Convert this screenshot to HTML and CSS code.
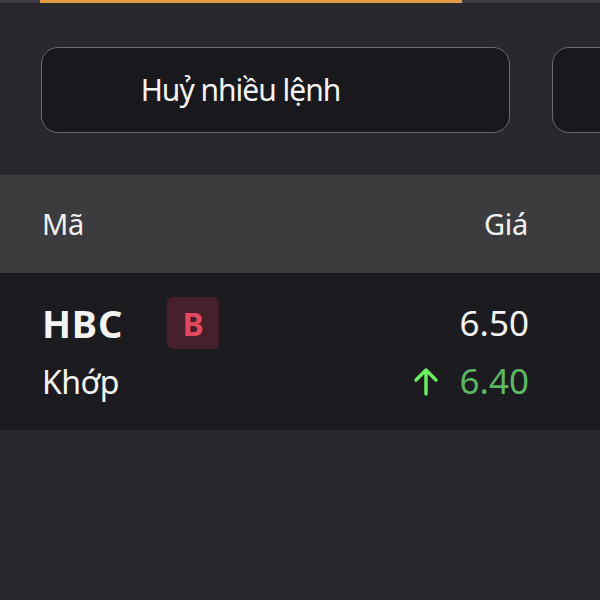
FILE: index.html
```html
<!DOCTYPE html>
<html lang="vi">
<head>
  <meta charset="UTF-8" />
  <meta name="viewport" content="width=device-width, initial-scale=1.0"/>
  <title>Lệnh</title>
  <link rel="stylesheet" href="styles.css">
</head>
<body>
  <div class="tabs">
    <div class="tab-line"></div>
  </div>

  <div class="actions">
    <button class="action">Huỷ nhiều lệnh</button>
    <button class="action"></button>
  </div>

  <div class="table-head">
    <span>Mã</span>
    <span>Giá</span>
  </div>

  <div class="order">
    <div class="order-left">
      <div class="symbol-line">
        <span class="symbol">HBC</span>
        <span class="side">B</span>
      </div>
      <div class="status">Khớp</div>
    </div>
    <div class="order-right">
      <div class="price">6.50</div>
      <div class="matched">
        <svg class="arrow" width="26" height="30" viewBox="0 0 26 30">
          <path d="M13 28V4M3 14L13 4l10 10" fill="none" stroke="#6cf063" stroke-width="3.4" stroke-linecap="round" stroke-linejoin="round"/>
        </svg>
        <span>6.40</span>
      </div>
    </div>
  </div>
</body>
</html>
```

FILE: styles.css
```css
body {
  margin: 0;
  height: 600px;
  overflow: hidden;
  background: #29282d;
  font-family: 'Noto Sans', 'Open Sans', sans-serif;
  color: #f4f4f4;
}
.tabs {
  height: 3px;
  background: #3b3b42;
  padding-left: 40px;
}
.tab-line {
  width: 422px;
  height: 3px;
  background: #e09a45;
}
.actions {
  display: flex;
  gap: 42px;
  padding: 44px 0 0 41px;
  overflow: hidden;
}
.action {
  flex: none;
  width: 469px;
  height: 86px;
  border: 1.5px solid #6a696e;
  border-radius: 17px;
  background: #19181c;
  color: #f4f4f4;
  font-family: 'Noto Sans', sans-serif;
  font-size: 30px;
  letter-spacing: -1px;
  padding: 0 70px 2px 0;
}
.table-head {
  margin-top: 42px;
  height: 96px;
  background: #3c3c3f;
  display: flex;
  justify-content: space-between;
  align-items: center;
  padding: 0 72px 2px 42px;
  font-size: 29px;
  letter-spacing: -0.3px;
  color: #f2f2f2;
}
.order {
  height: 157px;
  background: #1c1b1f;
  display: flex;
  justify-content: space-between;
  padding: 22px 71px 0 42px;
  box-sizing: border-box;
}
.symbol-line {
  display: flex;
  align-items: center;
  gap: 44px;
  height: 56px;
}
.symbol {
  font-size: 38px;
  font-weight: bold;
  letter-spacing: 0.8px;
}
.side {
  width: 52px;
  height: 52px;
  border-radius: 6px;
  background: #45202a;
  color: #e3485f;
  font-size: 32px;
  font-weight: bold;
  display: flex;
  align-items: center;
  justify-content: center;
}
.status {
  margin-top: 9px;
  font-size: 32px;
  letter-spacing: -0.5px;
}
.order-right {
  text-align: right;
}
.price {
  font-size: 35px;
  height: 56px;
  line-height: 56px;
}
.matched {
  margin-top: 6px;
  display: flex;
  align-items: center;
  gap: 21px;
  font-size: 35px;
  color: #5db765;
}
.arrow {
  display: block;
}
```
